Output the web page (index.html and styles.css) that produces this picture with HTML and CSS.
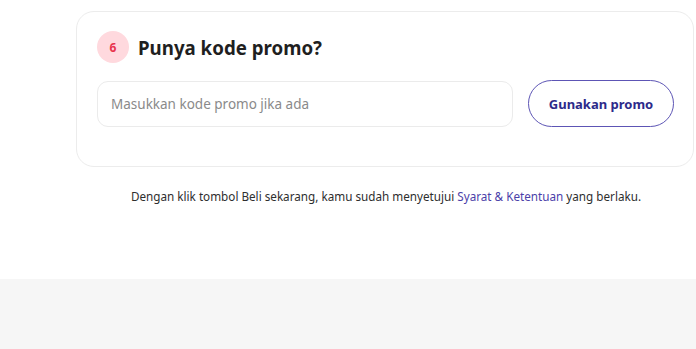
FILE: index.html
```html
<!DOCTYPE html>
<html>
<head>
<meta charset="utf-8">
<link rel="stylesheet" href="styles.css">
</head>
<body>
<main class="page">
  <section class="card">
    <div class="card-head">
      <span class="step">6</span>
      <h2 class="title">Punya kode promo?</h2>
    </div>
    <div class="promo-row">
      <input class="promo-input" type="text" placeholder="Masukkan kode promo jika ada">
      <button class="promo-btn">Gunakan promo</button>
    </div>
  </section>
  <p class="terms">Dengan klik tombol Beli sekarang, kamu sudah menyetujui <a class="link" href="#">Syarat &amp; Ketentuan</a> yang berlaku.</p>
</main>
<footer class="band"></footer>
</body>
</html>
```
FILE: styles.css
```css
html, body {
  margin: 0;
  padding: 0;
  background: #fff;
  font-family: "Noto Sans", "DejaVu Sans", sans-serif;
}
.page {
  padding: 11px 2px 0 76px;
  height: 279px;
  box-sizing: border-box;
}
.card {
  border: 1px solid #ececec;
  border-radius: 18px;
  padding: 18px 19px 39px 20px;
  background: #fff;
}
.card-head {
  display: flex;
  align-items: center;
  gap: 9px;
  height: 34px;
}
.step {
  width: 32px;
  height: 32px;
  border-radius: 50%;
  background: #ffd9de;
  color: #e8344e;
  font-size: 12px;
  font-weight: 700;
  display: flex;
  align-items: center;
  justify-content: center;
}
.title {
  margin: 0;
  font-size: 18.7px;
  font-weight: 700;
  color: #1f1f1f;
}
.promo-row {
  display: flex;
  align-items: center;
  gap: 15px;
  margin-top: 16px;
}
.promo-input {
  flex: 1;
  height: 46px;
  box-sizing: border-box;
  border: 1px solid #ebebeb;
  border-radius: 11px;
  padding: 0 13px;
  font-family: inherit;
  font-size: 13.5px;
  color: #333;
  outline: none;
}
.promo-input::placeholder {
  color: #8a8a8a;
}
.promo-btn {
  width: 146px;
  height: 47px;
  box-sizing: border-box;
  border: 1.5px solid #5d55b5;
  border-radius: 24px;
  background: #fff;
  color: #2d2a8a;
  font-family: inherit;
  font-size: 13px;
  font-weight: 700;
}
.terms {
  margin: 21px 0 0 0;
  padding-left: 55px;
  font-size: 11.7px;
  color: #2e2e2e;
}
.link {
  color: #4b3fa9;
  text-decoration: none;
}
.band {
  height: 70px;
  background: #f6f6f6;
}
```
